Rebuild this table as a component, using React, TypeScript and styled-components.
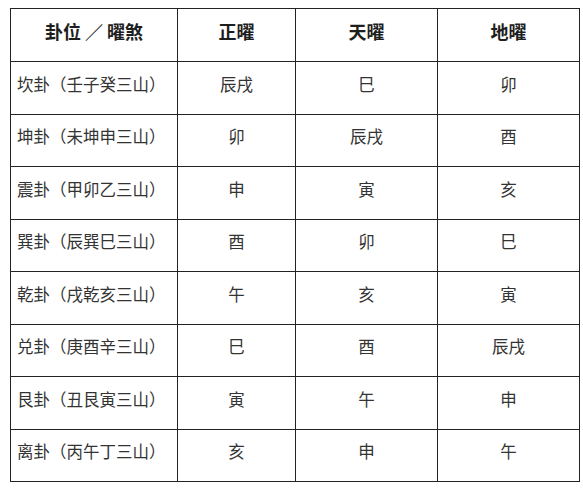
import styled, { createGlobalStyle } from "styled-components";

const GlobalStyle = createGlobalStyle`
  body {
    margin: 0;
    background: #ffffff;
    font-family: "Noto Sans CJK SC", "Noto Sans", sans-serif;
  }
`;

const Page = styled.div`
  padding: 8px 0 0 10px;
`;

const Table = styled.table`
  border-collapse: collapse;
  width: 570px;
  table-layout: fixed;
  color: #333333;
`;

const Col = styled.col<{ $w: number }>`
  width: ${(p) => p.$w}px;
`;

const HeadRow = styled.tr`
  height: 53px;
`;

const BodyRow = styled.tr`
  height: 52.5px;
`;

const HeadCell = styled.th`
  border: 1px solid #222222;
  font-size: 18px;
  font-weight: 700;
  color: #1e1e1e;
  text-align: center;
  padding: 0 0 8px;
`;

const Cell = styled.td<{ $left?: boolean }>`
  border: 1px solid #222222;
  font-size: 16.5px;
  font-weight: 400;
  text-align: ${(p) => (p.$left ? "left" : "center")};
  padding: ${(p) => (p.$left ? "0 0 8px 6px" : "0 0 8px")};
  white-space: nowrap;
`;

const rows = [
  ["坎卦（壬子癸三山）", "辰戌", "巳", "卯"],
  ["坤卦（未坤申三山）", "卯", "辰戌", "酉"],
  ["震卦（甲卯乙三山）", "申", "寅", "亥"],
  ["巽卦（辰巽巳三山）", "酉", "卯", "巳"],
  ["乾卦（戌乾亥三山）", "午", "亥", "寅"],
  ["兑卦（庚酉辛三山）", "巳", "酉", "辰戌"],
  ["艮卦（丑艮寅三山）", "寅", "午", "申"],
  ["离卦（丙午丁三山）", "亥", "申", "午"],
];

const App = () => {
  return (
    <>
      <GlobalStyle />
      <Page>
        <Table>
          <colgroup>
            <Col $w={167} />
            <Col $w={118} />
            <Col $w={142} />
            <Col $w={142} />
          </colgroup>
          <thead>
            <HeadRow>
              <HeadCell>卦位 ／ 曜煞</HeadCell>
              <HeadCell>正曜</HeadCell>
              <HeadCell>天曜</HeadCell>
              <HeadCell>地曜</HeadCell>
            </HeadRow>
          </thead>
          <tbody>
            {rows.map((row) => (
              <BodyRow key={row[0]}>
                <Cell $left>{row[0]}</Cell>
                <Cell>{row[1]}</Cell>
                <Cell>{row[2]}</Cell>
                <Cell>{row[3]}</Cell>
              </BodyRow>
            ))}
          </tbody>
        </Table>
      </Page>
    </>
  );
};

export default App;
